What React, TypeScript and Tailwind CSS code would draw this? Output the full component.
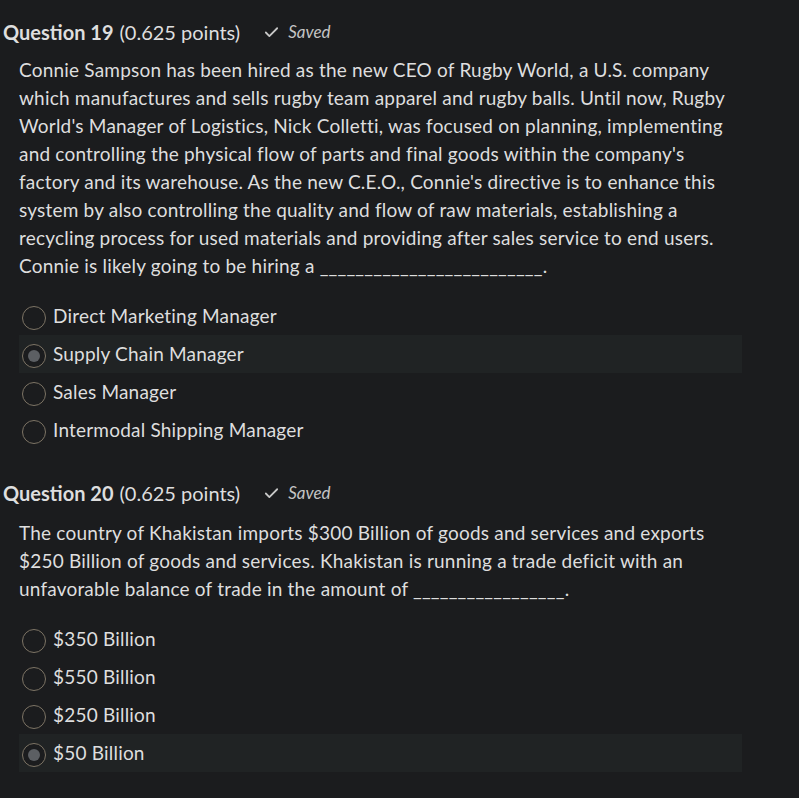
import { Check } from 'lucide-react'

type Q = {
  num: number
  text: string
  options: string[]
  selected: number
}

const QUESTIONS: Q[] = [
  {
    num: 19,
    text: "Connie Sampson has been hired as the new CEO of Rugby World, a U.S. company which manufactures and sells rugby team apparel and rugby balls. Until now, Rugby World's Manager of Logistics, Nick Colletti, was focused on planning, implementing and controlling the physical flow of parts and final goods within the company's factory and its warehouse. As the new C.E.O., Connie's directive is to enhance this system by also controlling the quality and flow of raw materials, establishing a recycling process for used materials and providing after sales service to end users. Connie is likely going to be hiring a _________________________.",
    options: ['Direct Marketing Manager', 'Supply Chain Manager', 'Sales Manager', 'Intermodal Shipping Manager'],
    selected: 1,
  },
  {
    num: 20,
    text: 'The country of Khakistan imports $300 Billion of goods and services and exports $250 Billion of goods and services. Khakistan is running a trade deficit with an unfavorable balance of trade in the amount of _________________.',
    options: ['$350 Billion', '$550 Billion', '$250 Billion', '$50 Billion'],
    selected: 3,
  },
]

function Radio({ checked }: { checked: boolean }) {
  return (
    <span className="w-[24px] h-[24px] rounded-full border border-[#7d7465] bg-[#1b1c1e] flex items-center justify-center shrink-0 mt-[3px]">
      {checked && <span className="w-[12px] h-[12px] rounded-full bg-[#5c5f63]" />}
    </span>
  )
}

function Question({ q, first }: { q: Q; first: boolean }) {
  return (
    <section className="mb-[30px]">
      {/* Header */}
      <div className="flex items-center pl-[3px] h-[28px]">
        <span className="font-bold text-[20px]">Question {q.num}</span>
        <span className="text-[20px] ml-[6px]">(0.625 points)</span>
        <span className="flex items-center ml-[23px] text-[#c4c4c4] italic text-[17px]">
          <Check size={17} strokeWidth={2.5} className="mr-[8px] text-[#c8c8c8]" />
          Saved
        </span>
      </div>

      <p
        className={`pl-[19px] w-[745px] text-[19px] leading-[28px] tracking-[0.2px] ${first ? 'mt-[10px]' : 'mt-[12px]'}`}
      >
        {q.text}
      </p>

      <div className="mt-[17px] pl-[19px]">
        {q.options.map((opt, i) => (
          <div
            key={opt}
            className={`flex items-center h-[38px] w-[723px] pl-[3px] gap-[7px] ${i === q.selected ? 'bg-[#202324]' : ''}`}
          >
            <Radio checked={i === q.selected} />
            <span className="text-[19px] tracking-[0.2px]">{opt}</span>
          </div>
        ))}
      </div>
    </section>
  )
}

export default function App() {
  return (
    <div
      className="min-h-screen bg-[#1b1c1e] text-[#dedede] pt-[18px]"
      style={{ fontFamily: 'Lato, "Open Sans", sans-serif' }}
    >
      {QUESTIONS.map((q, i) => (
        <Question key={q.num} q={q} first={i === 0} />
      ))}
    </div>
  )
}
